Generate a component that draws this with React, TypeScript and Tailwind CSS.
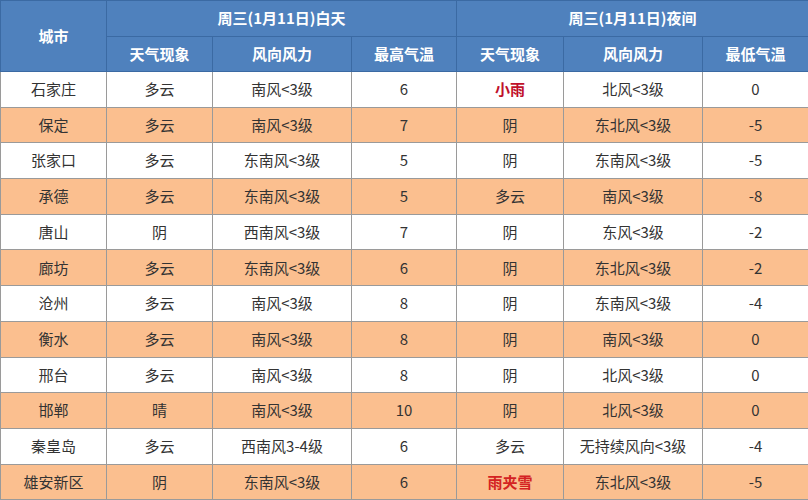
const rows: string[][] = [
  ['石家庄', '多云', '南风<3级', '6', '小雨', '北风<3级', '0'],
  ['保定', '多云', '南风<3级', '7', '阴', '东北风<3级', '-5'],
  ['张家口', '多云', '东南风<3级', '5', '阴', '东南风<3级', '-5'],
  ['承德', '多云', '东南风<3级', '5', '多云', '南风<3级', '-8'],
  ['唐山', '阴', '西南风<3级', '7', '阴', '东风<3级', '-2'],
  ['廊坊', '多云', '东南风<3级', '6', '阴', '东北风<3级', '-2'],
  ['沧州', '多云', '南风<3级', '8', '阴', '东南风<3级', '-4'],
  ['衡水', '多云', '南风<3级', '8', '阴', '南风<3级', '0'],
  ['邢台', '多云', '南风<3级', '8', '阴', '北风<3级', '0'],
  ['邯郸', '晴', '南风<3级', '10', '阴', '北风<3级', '0'],
  ['秦皇岛', '多云', '西南风3-4级', '6', '多云', '无持续风向<3级', '-4'],
  ['雄安新区', '阴', '东南风<3级', '6', '雨夹雪', '东北风<3级', '-5'],
];

const widths = ['w-[106px]', 'w-[106px]', 'w-[139px]', 'w-[105px]', 'w-[107px]', 'w-[139px]', 'w-[106px]'];

function Cell({ text, col }: { text: string; col: number }) {
  if (col === 4 && text === '小雨') {
    return <td className="border border-[#9a9a9a] font-bold text-[#c0102a]">{text}</td>;
  }
  if (col === 4 && text === '雨夹雪') {
    return <td className="border border-[#9a9a9a] font-bold text-[#d42222]">{text}</td>;
  }
  return <td className="border border-[#9a9a9a]">{text}</td>;
}

export default function App() {
  return (
    <div className="w-[808px] h-[500px] overflow-hidden bg-white" style={{ fontFamily: '"Noto Sans CJK SC", "Noto Sans", sans-serif' }}>
      <table className="w-[808px] table-fixed border-collapse text-center text-[15px] text-[#333]">
        <colgroup>
          {widths.map((w, i) => (
            <col key={i} className={w} />
          ))}
        </colgroup>
        <thead className="bg-[#4f81bd] text-white font-bold">
          <tr className="h-[36px]">
            <th rowSpan={2} className="border border-[#3b6aa3]">城市</th>
            <th colSpan={3} className="border border-[#3b6aa3]">周三(1月11日)白天</th>
            <th colSpan={3} className="border border-[#3b6aa3]">周三(1月11日)夜间</th>
          </tr>
          <tr className="h-[35px]">
            <th className="border border-[#3b6aa3]">天气现象</th>
            <th className="border border-[#3b6aa3]">风向风力</th>
            <th className="border border-[#3b6aa3]">最高气温</th>
            <th className="border border-[#3b6aa3]">天气现象</th>
            <th className="border border-[#3b6aa3]">风向风力</th>
            <th className="border border-[#3b6aa3]">最低气温</th>
          </tr>
        </thead>
        <tbody>
          {rows.map((r, i) => (
            <tr key={i} className={i % 2 === 1 ? 'h-[35.7px] bg-[#fbbf8f]' : 'h-[35.7px] bg-white'}>
              {r.map((t, j) => (
                <Cell key={j} text={t} col={j} />
              ))}
            </tr>
          ))}
        </tbody>
      </table>
    </div>
  );
}
